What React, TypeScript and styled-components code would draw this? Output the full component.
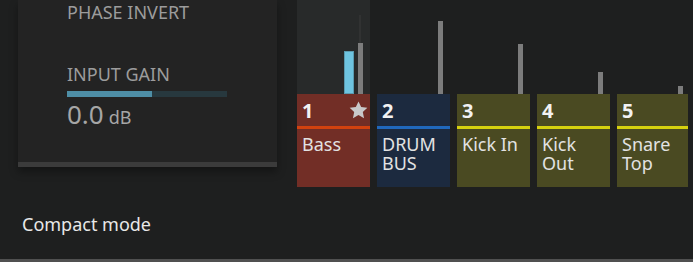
import React from 'react';
import styled, { createGlobalStyle } from 'styled-components';

const GlobalStyle = createGlobalStyle`
  html, body {
    margin: 0;
    padding: 0;
    background: #1e1f1f;
    font-family: 'Noto Sans', 'Liberation Sans', sans-serif;
  }
`;

type Channel = {
  num: number;
  name: string;
  bg: string;
  stripe: string;
  level: number;
  input?: number;
  star?: boolean;
  selected?: boolean;
};

const channels: Channel[] = [
  { num: 1, name: 'Bass', bg: '#722e26', stripe: '#d2420f', level: 51, input: 43, star: true, selected: true },
  { num: 2, name: 'DRUM BUS', bg: '#1c2a3f', stripe: '#2068bc', level: 73 },
  { num: 3, name: 'Kick In', bg: '#4a4a22', stripe: '#d6d10f', level: 50 },
  { num: 4, name: 'Kick Out', bg: '#4a4a22', stripe: '#d6d10f', level: 22 },
  { num: 5, name: 'Snare Top', bg: '#4a4a22', stripe: '#d6d10f', level: 8 },
];

const Star = () => (
  <svg width="19" height="18" viewBox="0 0 24 23">
    <path
      d="M12 0.5l3.4 7.2 7.9 0.9-5.8 5.4 1.6 7.9L12 18l-7.1 3.9 1.6-7.9L0.7 8.6l7.9-0.9z"
      fill="#c9c9c9"
    />
  </svg>
);

const App = () => {
  return (
    <Page>
      <GlobalStyle />
      <Top>
        <Panel>
          <Label>PHASE INVERT</Label>
          <Label $gap>INPUT GAIN</Label>
          <Slider>
            <SliderFill style={{ width: '53%' }} />
          </Slider>
          <Value>
            0.0<Unit>dB</Unit>
          </Value>
        </Panel>
        <Strip>
          {channels.map((ch) => (
            <Column key={ch.num}>
              <MeterArea $selected={ch.selected}>
                {ch.selected && <PeakLine />}
                {ch.input !== undefined && <InputBar style={{ height: ch.input }} />}
                <LevelBar style={{ height: ch.level }} />
              </MeterArea>
              <Cell $bg={ch.bg}>
                <NumRow>
                  <Num>{ch.num}</Num>
                  {ch.star && <Star />}
                </NumRow>
                <Stripe $color={ch.stripe} />
                <Name>{ch.name}</Name>
              </Cell>
            </Column>
          ))}
        </Strip>
      </Top>
      <Footer>Compact mode</Footer>
      <BottomLine />
    </Page>
  );
};

export default App;

const Page = styled.div`
  width: 693px;
  height: 262px;
  overflow: hidden;
  display: flex;
  flex-direction: column;
  background: #1e1f1f;
`;

const Top = styled.div`
  display: flex;
  height: 187px;
`;

const Panel = styled.div`
  width: 259px;
  height: 167px;
  margin-left: 18px;
  box-sizing: border-box;
  padding: 0 0 0 49px;
  background: #232323;
  border-bottom: 5px solid #3b3b3b;
  box-shadow: 0 5px 8px rgba(0, 0, 0, 0.35);
`;

const Label = styled.div<{ $gap?: boolean }>`
  font-size: 18px;
  line-height: 22px;
  color: #9c9c9c;
  margin-top: ${(p) => (p.$gap ? '40px' : '1px')};
`;

const Slider = styled.div`
  width: 160px;
  height: 6px;
  margin-top: 6px;
  background: #27383e;
`;

const SliderFill = styled.div`
  height: 100%;
  background: #4e8ea6;
`;

const Value = styled.div`
  font-size: 26px;
  line-height: 30px;
  color: #a6a6a6;
  margin-top: 2px;
`;

const Unit = styled.span`
  font-size: 18px;
  margin-left: 5px;
`;

const Strip = styled.div`
  display: flex;
  gap: 7px;
  margin: 0 5px 0 20px;
  flex: 1;
  overflow: hidden;
`;

const Column = styled.div`
  width: 73px;
  flex-shrink: 0;
  display: flex;
  flex-direction: column;
`;

const MeterArea = styled.div<{ $selected?: boolean }>`
  position: relative;
  height: 94px;
  display: flex;
  align-items: flex-end;
  justify-content: flex-end;
  gap: 4px;
  padding-right: 7px;
  background: ${(p) => (p.$selected ? '#282a2a' : 'transparent')};
`;

const PeakLine = styled.div`
  position: absolute;
  right: 9px;
  top: 15px;
  bottom: 0;
  width: 2px;
  background: #313232;
`;

const InputBar = styled.div`
  width: 10px;
  background: #6ec4e0;
  border: 1px solid #5a9bb0;
  box-sizing: border-box;
  position: relative;
`;

const LevelBar = styled.div`
  width: 5px;
  background: #7c7c7c;
  position: relative;
`;

const Cell = styled.div<{ $bg: string }>`
  height: 93px;
  background: ${(p) => p.$bg};
  display: flex;
  flex-direction: column;
`;

const NumRow = styled.div`
  display: flex;
  justify-content: space-between;
  align-items: center;
  height: 32px;
  padding: 0 2px 0 5px;
`;

const Num = styled.span`
  font-size: 20px;
  font-weight: 700;
  color: #f2f2f2;
`;

const Stripe = styled.div<{ $color: string }>`
  height: 3px;
  background: ${(p) => p.$color};
`;

const Name = styled.div`
  font-size: 18px;
  line-height: 19px;
  color: #e2e2e2;
  padding: 6px 4px 0 5px;
`;

const Footer = styled.div`
  font-size: 18px;
  color: #e8e8e8;
  margin: 25px 0 0 22px;
  line-height: 24px;
  flex: 1;
`;

const BottomLine = styled.div`
  height: 3px;
  background: #505050;
`;
